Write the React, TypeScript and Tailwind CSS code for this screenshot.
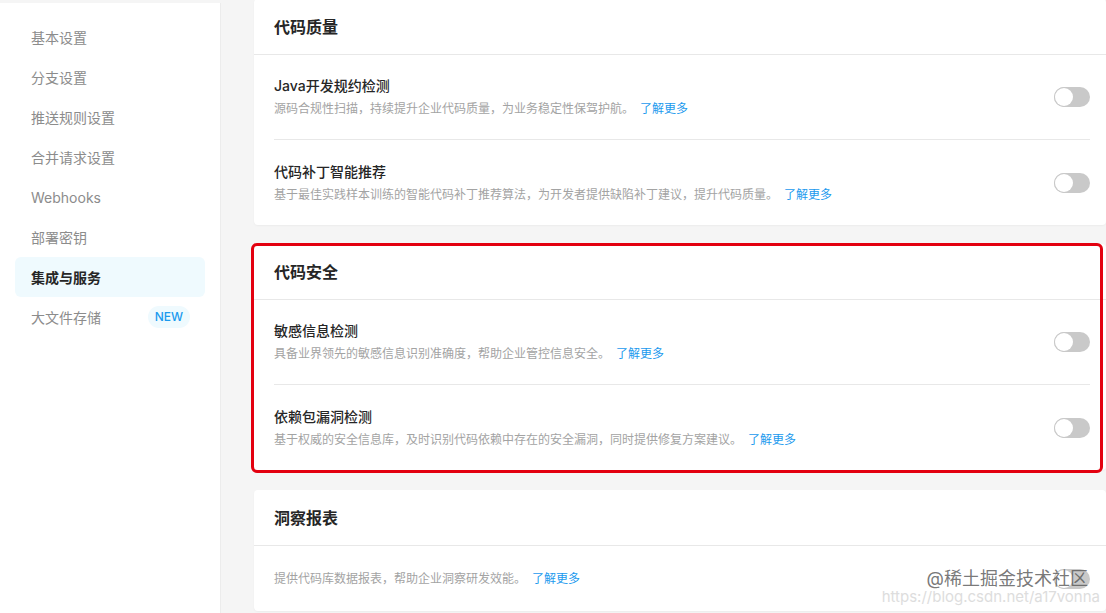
const font = "font-['Inter','Noto_Sans_CJK_SC',sans-serif]";

const menu = [
  "基本设置",
  "分支设置",
  "推送规则设置",
  "合并请求设置",
  "Webhooks",
  "部署密钥",
  "集成与服务",
  "大文件存储",
];

function Toggle() {
  return (
    <div className="w-[36px] h-[20px] rounded-full bg-[#c9c9c9] p-[1px] flex items-center">
      <div className="w-[18px] h-[18px] rounded-full bg-white shadow-[0_0_0_1px_#c9c9c9]" />
    </div>
  );
}

function Row({
  title,
  desc,
  last,
}: {
  title?: string;
  desc: string;
  last?: boolean;
}) {
  return (
    <div
      className={
        "flex items-center justify-between " +
        (title ? "h-[85px] " : "h-[65px] ") +
        (last ? "" : "border-b border-[#e8e8e8]")
      }
    >
      <div className="flex flex-col gap-[6px]">
        {title && (
          <div className="text-[14px] leading-[18px] font-medium text-[#262626]">
            {title}
          </div>
        )}
        <div className="text-[12px] leading-[16px] text-[#a3a3a3]">
          {desc}
          <span className="ml-[6px] text-[#1b9aee]">了解更多</span>
        </div>
      </div>
      <Toggle />
    </div>
  );
}

function Card({
  title,
  children,
}: {
  title: string;
  children: React.ReactNode;
}) {
  return (
    <div className="bg-white rounded-[4px] shadow-[0_1px_2px_rgba(0,0,0,0.04)]">
      <div className="h-[56px] flex items-center px-[20px] border-b border-[#e8e8e8] text-[16px] font-semibold text-[#262626]">
        {title}
      </div>
      <div className="pl-[20px] pr-[16px]">{children}</div>
    </div>
  );
}

export default function App() {
  return (
    <div className={`${font} w-[1106px] h-[613px] overflow-hidden bg-[#f5f5f5] flex`}>
      <div className="w-[221px] shrink-0 bg-white border-r border-[#ececec] mt-[3px] px-[15px] pt-[14px]">
        {menu.map((m) => {
          const active = m === "集成与服务";
          return (
            <div
              key={m}
              className={
                "h-[40px] flex items-center px-[16px] rounded-[6px] text-[14px] " +
                (active ? "bg-[#effafe] text-[#262626] font-semibold" : "text-[#8c8c8c]")
              }
            >
              <span className="flex-1">{m}</span>
              {m === "大文件存储" && (
                <span className="-mr-[1px] px-[7px] h-[22px] flex items-center rounded-full bg-[#effafe] text-[12px] font-medium text-[#1b9aee]">
                  NEW
                </span>
              )}
            </div>
          );
        })}
      </div>

      <div className="relative flex-1 pl-[33px] -mt-[1px] flex flex-col">
        <Card title="代码质量">
          <Row
            title="Java开发规约检测"
            desc="源码合规性扫描，持续提升企业代码质量，为业务稳定性保驾护航。"
          />
          <Row
            title="代码补丁智能推荐"
            desc="基于最佳实践样本训练的智能代码补丁推荐算法，为开发者提供缺陷补丁建议，提升代码质量。"
            last
          />
        </Card>

        <div className="relative mt-[19px]">
          <Card title="代码安全">
            <Row
              title="敏感信息检测"
              desc="具备业界领先的敏感信息识别准确度，帮助企业管控信息安全。"
            />
            <Row
              title="依赖包漏洞检测"
              desc="基于权威的安全信息库，及时识别代码依赖中存在的安全漏洞，同时提供修复方案建议。"
              last
            />
          </Card>
          <div className="absolute -top-[1px] -left-[3px] right-[3px] -bottom-[3px] border-[3px] border-[#e3000f] rounded-[6px] pointer-events-none" />
        </div>

        <div className="mt-[20px]">
          <Card title="洞察报表">
            <Row desc="提供代码库数据报表，帮助企业洞察研发效能。" last />
          </Card>
        </div>

        <div className="absolute right-[18px] top-[571px] text-[18px] text-[#555]/80 leading-none">
          @稀土掘金技术社区
        </div>
        <div className="absolute right-[6px] top-[590px] text-[15px] text-[#ddd] leading-none">
          https://blog.csdn.net/a17vonna
        </div>
      </div>
    </div>
  );
}
